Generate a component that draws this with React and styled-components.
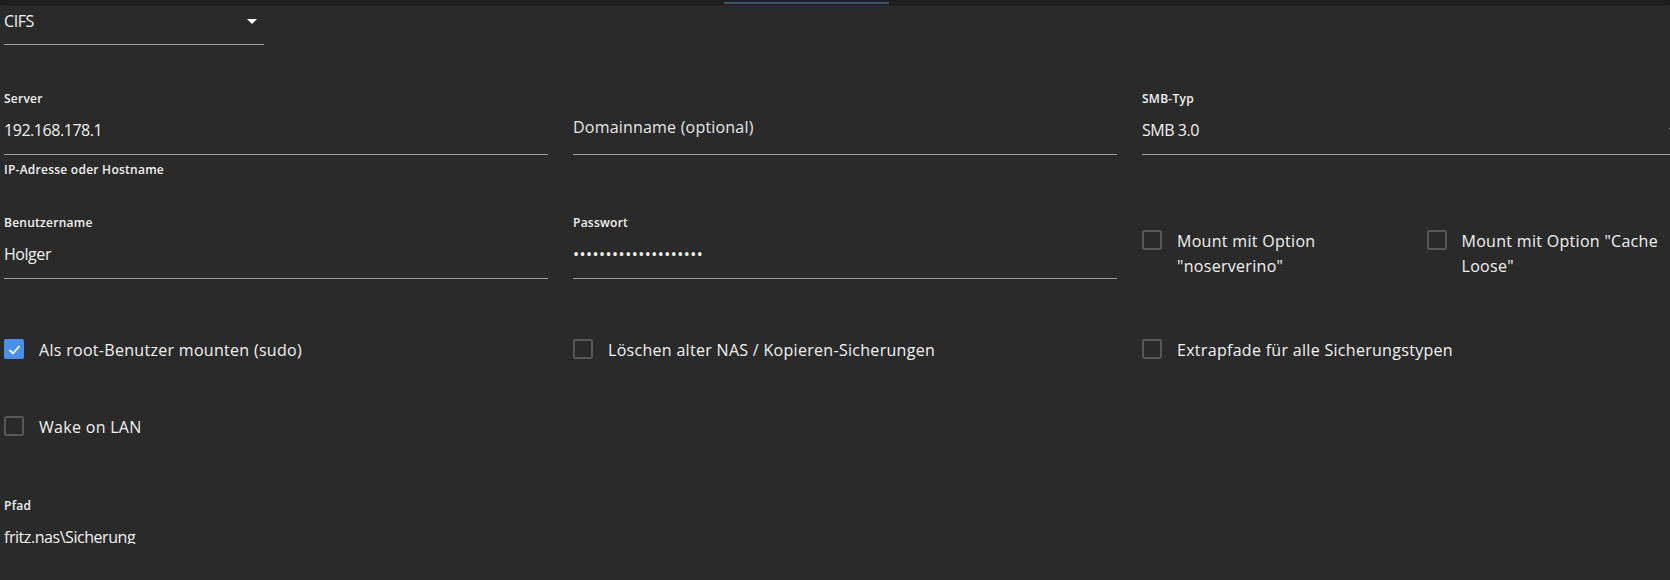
import React from "react"
import styled, { createGlobalStyle } from "styled-components"

const GlobalStyle = createGlobalStyle`
    html, body {
        margin: 0;
        padding: 0;
        background: #2a2a2a;
        overflow: hidden;
    }
    body {
        font-family: "Open Sans", "Noto Sans", "Liberation Sans", sans-serif;
        color: #f2f2f2;
    }
`

const Page = styled.div`
    width: 1670px;
    height: 580px;
    overflow: hidden;
    background: #2a2a2a;
`

const TopBar = styled.div`
    height: 4px;
    background: #1e1e1e;
    box-shadow: 0 1px 2px rgba(0, 0, 0, 0.45);
    display: flex;
    align-items: flex-end;
`

const TabIndicator = styled.div`
    margin-left: 724px;
    width: 165px;
    height: 2px;
    background: #3e5470;
`

const Form = styled.div`
    height: 540px;
    overflow: hidden;
    padding-left: 4px;
    display: flex;
    flex-direction: column;
`

const Row = styled.div`
    display: grid;
    grid-template-columns: repeat(3, 569px);
    align-items: start;
    margin-top: ${p => p.$top}px;
`

const Field = styled.div`
    width: ${p => p.$width || 544}px;
`

const FieldLabel = styled.div`
    font-size: 12px;
    font-weight: 600;
    line-height: 16px;
    letter-spacing: 0.25px;
    margin-bottom: 11px;
`

const InputLine = styled.div`
    display: flex;
    align-items: center;
    justify-content: space-between;
    padding: ${p => p.$padTop || 0}px 7px ${p => p.$padBottom || 12}px 0;
    border-bottom: 1px solid #9d9d9d;
`

const InputValue = styled.div`
    font-size: 16px;
    line-height: 24px;
    white-space: nowrap;
    letter-spacing: ${p => (p.$secret ? "0.5px" : "-0.45px")};
`

const Placeholder = styled.div`
    font-size: 16px;
    line-height: 24px;
    letter-spacing: 0.2px;
    padding: 24px 0 3px;
    color: #e6e6e6;
`

const HelperText = styled.div`
    font-size: 12px;
    font-weight: 600;
    line-height: 16px;
    letter-spacing: 0.25px;
    margin-top: 7px;
`

const CheckGroup = styled.div`
    display: grid;
    grid-template-columns: repeat(2, 284.5px);
    padding-top: 14px;
`

const CheckItem = styled.label`
    display: flex;
    align-items: flex-start;
    gap: 15px;
    padding-right: ${p => p.$padRight || 0}px;
`

const Box = styled.span`
    flex: none;
    box-sizing: border-box;
    width: 20px;
    height: 20px;
    margin-top: 1px;
    border-radius: 2px;
    border: 2px solid ${p => (p.$checked ? "#4a90e8" : "#575757")};
    background: ${p => (p.$checked ? "#4a90e8" : "transparent")};
    display: flex;
    align-items: center;
    justify-content: center;
`

const CheckText = styled.span`
    font-size: 16px;
    line-height: 25px;
    letter-spacing: 0.3px;
`

const Arrow = () => (
    <svg width="10" height="5" viewBox="0 0 10 5">
        <polygon points="0,0 10,0 5,5" fill="#ffffff" />
    </svg>
)

const Checkbox = ({ checked, label, padRight }) => (
    <CheckItem $padRight={padRight}>
        <Box $checked={checked}>
            {checked && (
                <svg width="15" height="15" viewBox="0 0 15 15">
                    <polyline points="2.5,8 6,11.5 12.5,4" fill="none" stroke="#fff" strokeWidth="1.8" />
                </svg>
            )}
        </Box>
        <CheckText>{label}</CheckText>
    </CheckItem>
)

const TextField = ({ label, value, helper, placeholder, select, secret }) => (
    <Field>
        {label && <FieldLabel>{label}</FieldLabel>}
        <InputLine>
            {placeholder ? (
                <Placeholder>{placeholder}</Placeholder>
            ) : (
                <InputValue $secret={secret}>{value}</InputValue>
            )}
            {select && <Arrow />}
        </InputLine>
        {helper && <HelperText>{helper}</HelperText>}
    </Field>
)

export default function App() {
    return (
        <>
            <GlobalStyle />
            <Page>
                <TopBar>
                    <TabIndicator />
                </TopBar>
                <Form>
                    <Field $width={260}>
                        <InputLine $padTop={5} $padBottom={11}>
                            <InputValue>CIFS</InputValue>
                            <Arrow />
                        </InputLine>
                    </Field>

                    <Row $top={46}>
                        <TextField label="Server" value="192.168.178.1" helper="IP-Adresse oder Hostname" />
                        <TextField placeholder="Domainname (optional)" />
                        <TextField label="SMB-Typ" value="SMB 3.0" select />
                    </Row>

                    <Row $top={37}>
                        <TextField label="Benutzername" value="Holger" />
                        <TextField label="Passwort" value={"•".repeat(20)} secret />
                        <CheckGroup>
                            <Checkbox label={'Mount mit Option "noserverino"'} padRight={25} />
                            <Checkbox label={'Mount mit Option "Cache Loose"'} padRight={25} />
                        </CheckGroup>
                    </Row>

                    <Row $top={59}>
                        <Checkbox checked label="Als root-Benutzer mounten (sudo)" />
                        <Checkbox label="Löschen alter NAS / Kopieren-Sicherungen" />
                        <Checkbox label="Extrapfade für alle Sicherungstypen" />
                    </Row>

                    <Row $top={52}>
                        <Checkbox label="Wake on LAN" />
                    </Row>

                    <Row $top={58}>
                        <TextField label="Pfad" value="fritz.nas\Sicherung" />
                    </Row>
                </Form>
            </Page>
        </>
    )
}
